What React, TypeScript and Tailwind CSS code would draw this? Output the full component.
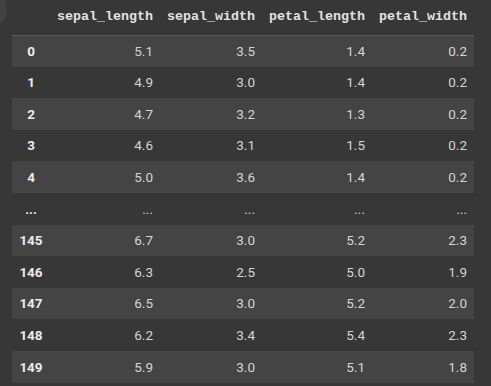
const columns = ['sepal_length', 'sepal_width', 'petal_length', 'petal_width']

const rows: [string, string[]][] = [
  ['0', ['5.1', '3.5', '1.4', '0.2']],
  ['1', ['4.9', '3.0', '1.4', '0.2']],
  ['2', ['4.7', '3.2', '1.3', '0.2']],
  ['3', ['4.6', '3.1', '1.5', '0.2']],
  ['4', ['5.0', '3.6', '1.4', '0.2']],
  ['...', ['...', '...', '...', '...']],
  ['145', ['6.7', '3.0', '5.2', '2.3']],
  ['146', ['6.3', '2.5', '5.0', '1.9']],
  ['147', ['6.5', '3.0', '5.2', '2.0']],
  ['148', ['6.2', '3.4', '5.4', '2.3']],
  ['149', ['5.9', '3.0', '5.1', '1.8']],
]

export default function App() {
  return (
    <div className="relative h-[386px] w-[491px] overflow-hidden bg-[#373737]">
      <div className="absolute -left-[29px] -top-[9px] h-[36px] w-[36px] rounded-full bg-[#424242]" />
      <div className="pl-[12px]">
        <table className="w-[462px] table-fixed border-collapse">
          <colgroup>
            <col className="w-[38px]" />
            <col className="w-[110px]" />
            <col className="w-[102px]" />
            <col className="w-[110px]" />
            <col className="w-[102px]" />
          </colgroup>
          <thead>
            <tr className="h-[35px] border-b border-[#5a5a5a]">
              <th />
              {columns.map((c) => (
                <th
                  key={c}
                  className="px-[7px] text-right font-['Liberation_Mono',monospace] text-[13.33px] font-bold text-[#e4e2e6]"
                >
                  {c}
                </th>
              ))}
            </tr>
          </thead>
          <tbody className="font-['Roboto',sans-serif] text-[13.5px]">
            {rows.map(([idx, vals], i) => (
              <tr key={idx} className={i % 2 === 0 ? 'h-[31.6px] bg-[#444444]' : 'h-[31.6px]'}>
                <th className="text-center font-bold text-[#ececec]">{idx}</th>
                {vals.map((v, j) => (
                  <td key={j} className="px-[7px] text-right text-[#d4d4d4]">
                    {v}
                  </td>
                ))}
              </tr>
            ))}
          </tbody>
        </table>
      </div>
    </div>
  )
}
